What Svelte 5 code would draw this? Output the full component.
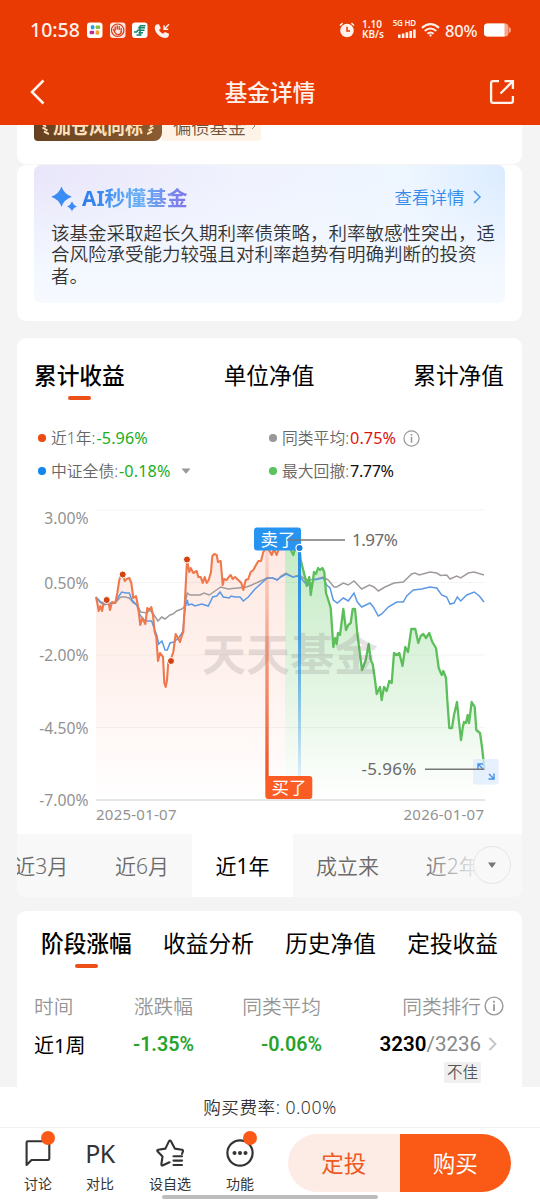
<script>
    let activeChart = $state('累计收益');
    let activePeriod = $state('近1年');
    let activeStage = $state('阶段涨幅');

    const chartTabs = ['累计收益', '单位净值', '累计净值'];
    const periods = ['近3月', '近6月', '近1年', '成立来', '近2年'];
    const stageTabs = ['阶段涨幅', '收益分析', '历史净值', '定投收益'];

    const axis = [
        { label: '3.00%', y: 510, text: 523.5 },
        { label: '0.50%', y: 582.5, text: 588.5 },
        { label: '-2.00%', y: 655, text: 661 },
        { label: '-4.50%', y: 727.5, text: 733.5 },
        { label: '-7.00%', y: 800, text: 806 },
    ];

    const fund =
        '96,597 97.7,605 98.7,611 100.3,606 102,611 104,601 106.7,600 108.7,603 110,610 112,602 115.3,603 117.3,593 119.3,580 120.7,576 122.7,575 124.7,581 126.7,579 129.3,578 131.3,583 133.3,598 136,596 138,606 140.3,625 142.3,618 145.3,624 147.3,608 149.3,610 151.3,607 153,615 154.7,632 156.3,637 158,661 160,653 163,657 164.3,683 165.7,687 167,680 168.3,662 170.5,660 173.3,652 175.7,634 178,638 180,642 182,635 183.3,632 185.3,594 187,560 189.3,572 190.7,568 193.3,573 196.7,571 198.3,577 200.7,577 202.7,583 204.7,577 206.7,583 208.7,580 211,572 212.3,556 214.3,554 216.7,555 218,562 220.7,561 222.7,585 224,579 226.7,580 228.7,577 230.7,575 232.7,579 235,577 238.3,580 241.3,583 243.3,590 245.7,580 248.3,579 250.7,572 253.3,570 256,565 258.3,561 261,561 263.3,552 266,548 268.3,549 271.7,555 274,549 276.7,555 278.7,549 282,548 285,545';
    const drawdown =
        '285,545 290,546 291.7,552 293.3,555 295.3,548 299.5,548 300.7,560 302.7,568 305,577 306.7,586 309.3,577 310.7,595 312.7,582 314,572 316,574 318,568 320,570 322.3,568 324.3,572 326,593 328.3,600 330.7,608 332,627 333.3,647 335.3,638 336.7,644 338,633 340,635 343.3,609 346,630 348.3,625 350.7,623 352.7,609 355,609 357.3,633 360.7,660 362,670 365.7,660 368.7,644 370.7,660 372.7,664 375,680 376.7,694 380,687 381.7,700 384,687 386.7,691 389.3,681 391.7,683 394,653 396.7,655 399.3,653 402.5,666 405.3,647 408,652 411.3,629 415.3,629 418.3,643 420.7,636 423.3,634 426,638 429.3,633 432.3,642 436,648 438.7,668 441.7,675 443.3,671 446,678 447.3,700 449.3,728 452,728 454,715 457,702 459,722 461,740 462.7,728 464,722 466,723 467.7,715 469,723 471.7,702 474.7,707 476.3,730 478.7,732 480,733 482,747 484.3,768';
    const average =
        '96,598 100.7,603 104,605 110,603 115,603 120.7,597 125,597 129.3,598 133.3,603 137.3,605 140.7,612 146.7,613 150,610 154,615 158,621 161.7,617 165,619 170,615 173,614 176.7,611 181.7,609 184.3,607 187.3,593 190,595 200,595 204,593 209.3,595 215,591 220.7,587 228,589 238,588 246.7,587 251.7,585 258.3,582 267.3,578 272.7,578 277.3,580 281,576 286,573 292.7,577 299.3,575 303.3,578 308.3,580 316.7,579 323.3,577 328.3,580 334,587 336.7,587 343.3,583 348.3,585 354,581 361.7,589 369.3,585 374,587 378.3,591 385,587 394,583 403.3,582 411.7,574 415,573 419.3,575 430,572 436.7,573 440.7,575.5 446.7,575 450,579 456.7,576 460.7,578 468.3,573 474,572 484,575';
    const index =
        '96,597 100.7,602 105,604 115,603 118.3,597 121.7,592 126,593 129.3,593 132,600 136.7,605 140,615 145,621 151.7,621 154,628 156.7,635 158.7,644 162,641 165,650 167.3,650 170,643 174,642 179.3,637 182.7,632 185.3,607 187.3,600 188.3,605 191.7,604 195,606 201.7,604 208.3,606 212.7,597 216.7,596 220,592 223.3,597 229.3,598 231,596 235,597 240,597 243.3,601 248.3,597 255,589 261.7,583 267.3,578 272.7,578 277.3,580 281,577 286,574 292.7,577 299.3,576 305,583 310.7,586 313.3,580 323.3,578 326.7,585 330,588 333.3,600 337.3,603 343.3,598 348.3,601 354,593 357.3,602 361.7,607 370,603 373.3,607 378.3,616 381.7,614 388.3,607 396.7,602 403.3,602 406.7,596 413.3,590 421.7,589 430,587 436.7,588 441.7,595 446.7,597 450,604 454,603 457.3,597 460.7,601 466.7,595 474.3,592 479.3,596 484,602';

    const trades = [[106.7, 600], [122.7, 574.5], [187, 559.5], [171, 661]];
</script>

{#snippet info(size)}
    <svg width={size} height={size} viewBox="0 0 18 18" fill="none" stroke="#999" stroke-width="1.3">
        <circle cx="9" cy="9" r="8" />
        <path d="M9 7.5V13.5M9 4.3V6.1" stroke-width="1.6" />
    </svg>
{/snippet}

<div class="page">
    <header>
        <div class="status">
            <span class="clock">10:58</span>
            <svg class="apps" width="84" height="18" viewBox="0 0 84 18">
                <rect x="0" y="1.5" width="15.5" height="15.5" rx="3" fill="#fff" />
                <rect x="3.8" y="4.3" width="3.6" height="4" rx="1.2" fill="#2b9be0" />
                <rect x="8.6" y="4.6" width="4.6" height="3.4" rx="1.2" fill="#8cbf3f" />
                <rect x="2.6" y="9.8" width="4.6" height="3.4" rx="1.2" fill="#b2339b" />
                <rect x="8.6" y="9.6" width="3.6" height="4.2" rx="1.2" fill="#f0a32e" />
                <rect x="23" y="1.5" width="15.5" height="15.5" rx="3" fill="#ffe6de" />
                <circle cx="30.7" cy="9.2" r="6.2" fill="none" stroke="#d83a18" stroke-width="1.2" />
                <path d="M28 11.5L26.6 8.5M28.2 9V6M30.2 8V5M32.2 8.4V5.6M34.2 9.3V7.4M28 11.5Q29.5 14.2 32 13.6Q34.6 12.6 34.2 9.3" fill="none" stroke="#d83a18" stroke-width="1.3" stroke-linecap="round" />
                <rect x="45" y="1.5" width="15.5" height="15.5" rx="3" fill="#fff" />
                <path d="M58.5 4.8H53.5L52 6.8H58M57.5 9.2H51L49.5 11H47M56 11.8H51.5M54.5 14H49.5M53 5V14" fill="none" stroke="#168469" stroke-width="1.5" />
                <path d="M69.2 3.5L72 3.3L73.8 7.2L72 8.9Q73.2 11.6 76 12.7L78 10.9L82 12.8Q82.3 17 77.7 17C72 16.7 66.5 10 68 5.3Z" fill="#fff1eb" />
                <path d="M82 3.3L77.3 8M77 4.2V8.3H81.2" fill="none" stroke="#fff1eb" stroke-width="1.4" />
            </svg>
            <svg class="alarm" width="16" height="16" viewBox="0 0 16 16">
                <circle cx="8" cy="8.5" r="6.8" fill="#fff1eb" />
                <path d="M8 4.8V9H11" fill="none" stroke="#e93a03" stroke-width="1.5" />
                <path d="M1 3.5L3.6 1.2M15 3.5L12.4 1.2" stroke="#fff1eb" stroke-width="1.6" />
            </svg>
            <span class="speed">1.10<br />KB/s</span>
            <div class="signal">
                <span>5G HD</span>
                <svg width="19" height="9" viewBox="0 0 19 9" fill="#fff1eb">
                    <rect x="1" y="5.5" width="2.6" height="3.5" />
                    <rect x="4.8" y="4.5" width="2.6" height="4.5" />
                    <rect x="8.6" y="3.3" width="2.6" height="5.7" />
                    <rect x="12.4" y="2" width="2.6" height="7" />
                    <rect x="16.1" y="0.5" width="2.6" height="8.5" />
                </svg>
            </div>
            <svg class="wifi" width="19" height="16" viewBox="0 0 20 16" fill="none" stroke="#fff1eb" stroke-width="2.2">
                <path d="M1 5.8Q10 -2 19 5.8M3.9 9Q10 3.8 16.1 9M6.7 12Q10 9.3 13.3 12" />
                <circle cx="10" cy="13.8" r="1.2" fill="#fff1eb" stroke="none" />
            </svg>
            <span class="percent">80%</span>
            <svg class="battery" width="27" height="14" viewBox="0 0 27 14">
                <rect x="0" y="0.5" width="24.5" height="13" rx="3.5" fill="#f6a78c" />
                <path d="M25 4Q27 4.5 27 7T25 10Z" fill="#f6a78c" />
                <path d="M3.5 .5H20.5V13.5H3.5Q0 13.5 0 10V4Q0 .5 3.5 .5Z" fill="#fff" />
            </svg>
        </div>
        <nav>
            <svg width="16" height="26" viewBox="0 0 16 26" fill="none" stroke="#fff3ee" stroke-width="2.5">
                <path d="M13.5 1.5L2 13L13.5 24.5" />
            </svg>
            <h1>基金详情</h1>
            <svg width="26" height="26" viewBox="0 0 26 26" fill="none" stroke="#fff3ee" stroke-width="2.3">
                <path d="M10 2.1H4Q2.1 2.1 2.1 4V22Q2.1 23.9 4 23.9H22Q23.9 23.9 23.9 22V17" />
                <path d="M11.5 14.5L23 3M15.5 2.1H23.9V10" />
            </svg>
        </nav>
    </header>

    <main>
        <section class="card tags">
            <div class="honor">
                <svg width="8" height="20" viewBox="0 0 8 20" fill="none" stroke="#ffe0ba" stroke-width="2">
                    <path d="M0.5 7L5 11M1.5 11.5L6.5 14.5M3 15.5L8 18" />
                </svg>
                <b>加仓风向标</b>
                <svg width="8" height="20" viewBox="0 0 8 20" fill="none" stroke="#ffe0ba" stroke-width="2">
                    <path d="M7.5 7L3 11M6.5 11.5L1.5 14.5M5 15.5L0 18" />
                </svg>
            </div>
            <div class="kind">偏债基金
                <svg width="5" height="8" viewBox="0 0 5 8" fill="none" stroke="#a08a78"><path d="M1 1L4 4L1 7" /></svg>
            </div>
        </section>

        <section class="card ai">
            <div class="ai-box">
                <div class="ai-head">
                    <svg class="spark" width="27" height="27" viewBox="0 0 27 27" fill="#3b8cf5">
                        <path d="M10.5 .5Q13 8 20.8 10.8Q13 13.5 10.5 21Q8 13.5 .2 10.8Q8 8 10.5 .5Z" />
                        <path d="M21 15.5Q22.2 19 26 20.5Q22.2 21.8 21 25.5Q19.8 21.8 16 20.5Q19.8 19 21 15.5Z" />
                    </svg>
                    <h2>AI秒懂基金</h2>
                    <span class="detail">查看详情</span>
                    <svg class="go" width="10" height="14" viewBox="0 0 10 14" fill="none" stroke="#4c98ee" stroke-width="1.5"><path d="M2 1L8 7L2 13" /></svg>
                </div>
                <p>该基金采取超长久期利率债策略，利率敏感性突出，适<br />合风险承受能力较强且对利率趋势有明确判断的投资<br />者。</p>
            </div>
        </section>

        <section class="card performance">
            <div class="chart-tabs">
                {#each chartTabs as tab}
                    <button class:active={activeChart === tab} onclick={() => (activeChart = tab)}>{tab}</button>
                {/each}
            </div>
            <div class="legend">
                <div class="item"><i class="orange"></i>近1年:<span class="down">-5.96%</span></div>
                <div class="item"><i class="gray"></i>同类平均:<span class="up">0.75%</span><span class="tip">{@render info(17)}</span></div>
                <div class="item"><i class="blue"></i>中证全债:<span class="down">-0.18%</span>
                    <svg class="caret" width="10" height="6" viewBox="0 0 10 6" fill="#999"><path d="M0.5 .5H9.5L5.8 5Q5 5.8 4.2 5Z" /></svg>
                </div>
                <div class="item"><i class="green"></i>最大回撤:<span class="plain">7.77%</span></div>
            </div>

            <svg class="chart" width="505" height="339" viewBox="17 495 505 339">
                <defs>
                    <linearGradient id="fundFill" x1="0" y1="545" x2="0" y2="799" gradientUnits="userSpaceOnUse">
                        <stop offset="0" stop-color="#f96134" stop-opacity=".14" />
                        <stop offset=".55" stop-color="#f96134" stop-opacity=".08" />
                        <stop offset="1" stop-color="#f96134" stop-opacity="0" />
                    </linearGradient>
                    <linearGradient id="dropFill" x1="0" y1="545" x2="0" y2="799" gradientUnits="userSpaceOnUse">
                        <stop offset="0" stop-color="#5fc75f" stop-opacity=".36" />
                        <stop offset=".5" stop-color="#5fc75f" stop-opacity=".2" />
                        <stop offset="1" stop-color="#5fc75f" stop-opacity="0" />
                    </linearGradient>
                    <linearGradient id="buyLine" x1="0" y1="515" x2="0" y2="776" gradientUnits="userSpaceOnUse">
                        <stop offset="0" stop-color="#ee5423" stop-opacity="0" />
                        <stop offset=".55" stop-color="#ee5423" stop-opacity=".55" />
                        <stop offset="1" stop-color="#ee5423" />
                    </linearGradient>
                    <linearGradient id="sellLine" x1="0" y1="550" x2="0" y2="780" gradientUnits="userSpaceOnUse">
                        <stop offset="0" stop-color="#268ee4" />
                        <stop offset=".35" stop-color="#268ee4" stop-opacity=".85" />
                        <stop offset="1" stop-color="#268ee4" stop-opacity=".1" />
                    </linearGradient>
                </defs>

                {#each axis as row}
                    <line x1="96" x2="485" y1={row.y} y2={row.y} stroke={row.y === 800 ? '#e6e6e6' : '#f3f3f3'} stroke-width={row.y === 800 ? 2 : 1} />
                    <text class="axis" x="88.5" y={row.text} text-anchor="end">{row.label}</text>
                {/each}

                <polygon points="96,799 {fund} 285,799" fill="url(#fundFill)" />
                <polygon points="285,799 {drawdown} 484.3,799" fill="url(#dropFill)" />
                <polyline points={average} fill="none" stroke="#a09b9a" stroke-width="1.5" />
                <polyline points={index} fill="none" stroke="#5b98e6" stroke-width="1.5" />
                <polyline points={fund} fill="none" stroke="#ef784d" stroke-width="2.1" stroke-linejoin="round" />
                <polyline points={drawdown} fill="none" stroke="#5dbf5b" stroke-width="2.3" stroke-linejoin="round" />
                <text class="watermark" x="202" y="671" textLength="176">天天基金</text>

                <rect x="265.3" y="515" width="3.4" height="264" fill="url(#buyLine)" />
                <rect x="298" y="549" width="3" height="231" fill="url(#sellLine)" />
                {#each trades as [x, y]}
                    <circle cx={x} cy={y} r="3.5" fill="#d3420f" stroke="#fff" stroke-width="1" />
                {/each}

                <rect x="254" y="527.5" width="47" height="23" rx="3" fill="#2794f2" />
                <text class="flag" x="260.5" y="545.5">卖了</text>
                <line x1="287" x2="345" y1="540" y2="540" stroke="#777" stroke-width="1.5" />
                <circle cx="299.5" cy="548" r="3.6" fill="#1683e0" stroke="#fff" stroke-width="1.2" />
                <text class="value" x="352" y="545.5" textLength="46">1.97%</text>

                <rect x="265.3" y="776" width="47" height="23" rx="3" fill="#fb5c24" />
                <text class="flag" x="271.5" y="794">买了</text>

                <rect x="473" y="759" width="25.5" height="25.5" rx="2" fill="#deebfd" fill-opacity=".75" />
                <path d="M478 769V764H483M478 764L483 769M489 774L494 779M494 773.5V779H488.5" fill="none" stroke="#438fea" stroke-width="1.4" />
                <line x1="425" x2="484.5" y1="769.3" y2="769.3" stroke="#777" stroke-width="1.5" />
                <text class="value" x="361.5" y="775" textLength="55">-5.96%</text>
                <text class="date" x="96" y="820" textLength="80.5">2025-01-07</text>
                <text class="date" x="403.5" y="820" textLength="80.5">2026-01-07</text>
            </svg>

            <div class="periods">
                {#each periods as period}
                    <button class:active={activePeriod === period} onclick={() => (activePeriod = period)}>{period}</button>
                {/each}
                <div class="more">
                    <span><svg width="8" height="6" viewBox="0 0 8 6" fill="#777"><path d="M0 .5H8L4.8 5Q4 6 3.2 5Z" /></svg></span>
                </div>
            </div>
        </section>

        <section class="card stages">
            <div class="stage-tabs">
                {#each stageTabs as tab}
                    <button class:active={activeStage === tab} onclick={() => (activeStage = tab)}>{tab}</button>
                {/each}
            </div>
            <div class="row head">
                <span>时间</span><span>涨跌幅</span><span>同类平均</span><span>同类排行</span>{@render info(20)}
            </div>
            <div class="row body">
                <span>近1周</span>
                <span class="num">-1.35%</span>
                <span class="num">-0.06%</span>
                <span class="rank"><b>3230</b>/3236</span>
                <svg width="9" height="14" viewBox="0 0 9 14" fill="none" stroke="#c4c4c4" stroke-width="1.8"><path d="M1.5 1L7.5 7L1.5 13" /></svg>
            </div>
            <span class="grade">不佳</span>
        </section>
    </main>

    <footer>
        <div class="fee">购买费率: 0.00%</div>
        <div class="actions">
            <div class="action">
                <svg width="26" height="28" viewBox="0 0 26 28" fill="none" stroke="#333" stroke-width="2.1">
                    <path d="M1.6 26V3.5Q1.6 2.3 2.8 2.3H23Q24.3 2.3 24.3 3.5V19.8Q24.3 21 23 21H6.5Z" stroke-linejoin="round" />
                </svg>
                <span>讨论</span>
                <em></em>
            </div>
            <div class="action">
                <strong>PK</strong>
                <span>对比</span>
            </div>
            <div class="action">
                <svg width="28" height="28" viewBox="0 0 28 28" fill="none" stroke="#333" stroke-width="2.1" stroke-linejoin="round" stroke-linecap="round">
                    <path d="M26 15L27 12.2Q27.3 11 26 10.8L18.8 9.6L15.1 2.4Q14 .7 12.9 2.4L9.4 9.6L2.2 10.8Q.5 11.2 1.7 12.6L6.5 17.6L5.4 25Q5.2 27 7 26.2L13.5 23.3" />
                    <path d="M17.5 17.2H26M17.5 21.6H26M17.5 26H26" />
                </svg>
                <span>设自选</span>
            </div>
            <div class="action">
                <svg width="28" height="28" viewBox="0 0 28 28" fill="none" stroke="#333" stroke-width="2.2">
                    <circle cx="14" cy="14" r="12.6" />
                    <g fill="#333" stroke="none"><circle cx="8.5" cy="14" r="2" /><circle cx="14" cy="14" r="2" /><circle cx="19.5" cy="14" r="2" /></g>
                </svg>
                <span>功能</span>
                <em></em>
            </div>
            <div class="buttons">
                <button class="plan">定投</button>
                <button class="buy">购买</button>
            </div>
        </div>
        <div class="home"></div>
    </footer>
</div>

<style>
    :global(body) {
        margin: 0;
        font-family: "Noto Sans", "Noto Sans CJK SC", sans-serif;
    }

    .page {
        width: 540px;
        height: 1200px;
        display: flex;
        flex-direction: column;
        overflow: hidden;
        background: #f4f4f4;
        color: #000;
    }

    svg {
        display: block;
        flex: none;
    }

    button {
        font: inherit;
        border: none;
        background: none;
        padding: 0;
        color: inherit;
        white-space: nowrap;
    }

    h1, h2, p {
        margin: 0;
    }

    header {
        height: 125px;
        flex: none;
        background: #e93a03;
        color: #fff1eb;
    }

    .status {
        display: flex;
        align-items: center;
        height: 60px;
        padding: 0 30px;
        box-sizing: border-box;
    }

    .clock {
        width: 57px;
        margin-top: -2px;
        font: 500 19.5px "Noto Sans", sans-serif;
        white-space: nowrap;
    }

    .alarm {
        margin-left: auto;
    }

    .speed {
        margin-left: 7px;
        width: 25px;
        margin-top: -2px;
        font: 600 10px/10px "Noto Sans", sans-serif;
    }

    .signal {
        width: 26px;
        margin-left: 3px;
        margin-top: -3px;
        display: flex;
        flex-direction: column;
        align-items: flex-end;
        gap: 2px;
        font: 600 8px/8px "Noto Sans", sans-serif;
        letter-spacing: -0.2px;
        white-space: nowrap;
    }

    .wifi {
        margin-left: 5px;
    }

    .percent {
        width: 35px;
        margin: 0 4px 0 5px;
        font: 500 16.5px "Noto Sans", sans-serif;
        letter-spacing: -0.2px;
    }

    .battery {
        margin-right: -1px;
    }

    nav {
        display: flex;
        align-items: center;
        justify-content: space-between;
        height: 64px;
        padding: 0 25px 0 30px;
    }

    h1 {
        font-size: 22.7px;
        font-weight: 500;
        margin: -2px 0 0 5px;
    }

    main {
        flex: 1;
        min-height: 0;
        overflow: hidden;
        padding: 0 18px 0 17px;
    }

    .card {
        background: #fff;
        border-radius: 9px;
    }

    .tags {
        height: 39px;
        border-radius: 0 0 9px 9px;
        display: flex;
        padding-left: 17px;
        overflow: hidden;
    }

    .honor, .kind {
        display: flex;
        align-items: center;
        box-sizing: border-box;
        height: 27px;
        margin-top: -11.5px;
        padding-bottom: 2px;
    }

    .honor {
        justify-content: center;
        gap: 4px;
        width: 128px;
        border-radius: 4px 10px 8px 4px;
        background: linear-gradient(90deg, #66401f, #8b5c31);
        color: #ffe0ba;
        font-size: 18px;
    }

    .kind {
        gap: 5px;
        width: 99px;
        padding-left: 11px;
        background: #fdf3e7;
        border-radius: 0 4px 4px 0;
        color: #73543b;
        font-size: 18.3px;
        font-weight: 350;
    }

    .ai {
        margin-top: 1px;
        height: 156px;
        padding: 0 17.5px 0 17px;
        box-sizing: border-box;
    }

    .ai-box {
        height: 138px;
        padding: 16px 9px 0 17px;
        box-sizing: border-box;
        border-radius: 7px;
        background:
            linear-gradient(180deg, rgba(245, 249, 255, 0) 10%, #f3f8ff 75%, #f6faff),
            linear-gradient(100deg, #e9e6fa 0%, #f0f2fe 42%, #eef6ff 75%, #d8eaff 100%);
    }

    .ai-head {
        display: flex;
        align-items: center;
        height: 32px;
    }

    .spark {
        margin-top: 5px;
    }

    h2 {
        margin: 2px 0 0 4px;
        font-size: 20.8px;
        font-weight: 700;
        line-height: 32px;
        background: linear-gradient(90deg, #277bed, #68b0f5 55%, #8071ea);
        -webkit-background-clip: text;
        background-clip: text;
        color: transparent;
    }

    .detail {
        margin-left: auto;
        margin-right: 7px;
        font-size: 17.5px;
        line-height: 30px;
        font-weight: 350;
        color: #348aec;
    }

    .go {
        margin-right: 14px;
    }

    .ai-box p {
        margin-top: 8.5px;
        font-size: 18.5px;
        line-height: 21.7px;
        font-weight: 350;
        color: #333;
        white-space: nowrap;
    }

    .performance {
        margin-top: 17px;
        height: 559px;
        display: flex;
        flex-direction: column;
        overflow: hidden;
    }

    .chart-tabs {
        display: flex;
        justify-content: space-between;
        padding: 20px 18px 0 17px;
        height: 44px;
        flex: none;
        font-size: 22.7px;
        line-height: 36px;
    }

    .chart-tabs button, .stage-tabs button {
        display: flex;
        flex-direction: column;
        align-items: center;
    }

    .chart-tabs .active, .stage-tabs .active {
        font-weight: 500;
    }

    .chart-tabs .active::after, .stage-tabs .active::after {
        content: "";
        width: 22.5px;
        height: 4px;
        margin-top: 2px;
        border-radius: 2px;
        background: #ec5018;
    }

    .legend {
        display: grid;
        grid-template-columns: 231px 1fr;
        grid-auto-rows: 33px;
        padding: 19.5px 0 0 21px;
        height: 73.5px;
        flex: none;
    }

    .item {
        display: flex;
        align-items: center;
        font-size: 15.8px;
        line-height: 24px;
        font-weight: 350;
        color: #666;
    }

    .item i {
        width: 7.5px;
        height: 7.5px;
        border-radius: 50%;
        margin-right: 5.5px;
    }

    .orange { background: #ec4c12; }
    .gray { background: #999; }
    .blue { background: #1487ee; }
    .green { background: #5cc25e; }

    .down, .up, .plain {
        margin-left: 1px;
        font-size: 16.2px;
        font-weight: 400;
        letter-spacing: 0.1px;
    }

    .down { color: #1dad1d; }
    .up { color: #dc1414; }
    .plain { color: #111; letter-spacing: -0.4px; }

    .tip {
        margin-left: 7px;
    }

    .caret {
        margin-left: 11px;
    }

    .chart {
        margin-top: -0.5px;
    }

    .axis {
        font-size: 15.7px;
        fill: #929292;
    }

    .date {
        font-size: 15px;
        fill: #929292;
    }

    .value {
        font-size: 17px;
        fill: #6a6a6a;
    }

    .flag {
        font-size: 17.5px;
        fill: #fff;
    }

    .watermark {
        font-size: 44px;
        font-weight: 700;
        fill: #776d70;
        fill-opacity: 0.2;
    }

    .periods {
        position: relative;
        flex: 1;
        display: flex;
        margin-left: -26px;
        background: #f8f8f8;
    }

    .periods button {
        flex: none;
        padding: 0 23.3px 1px;
        font-size: 21px;
        font-weight: 350;
        color: #6b6b6b;
    }

    .periods .active {
        background: #fff;
        color: #000;
        font-weight: 400;
    }

    .more {
        position: absolute;
        top: 0;
        right: 0;
        bottom: 0;
        width: 100px;
        display: flex;
        align-items: center;
        justify-content: flex-end;
        background: linear-gradient(90deg, rgba(248, 248, 248, 0), #f8f8f8 60%);
    }

    .more span {
        width: 36px;
        height: 36px;
        margin-right: 11px;
        display: flex;
        align-items: center;
        justify-content: center;
        border: 1px solid #e5e5e5;
        border-radius: 50%;
        background: #f8f8f8;
    }

    .stages {
        margin-top: 14px;
        height: 200px;
    }

    .stage-tabs {
        display: flex;
        justify-content: space-between;
        padding: 15px 24px 0 24px;
        height: 61px;
        font-size: 22.7px;
        line-height: 36px;
    }

    .row {
        display: grid;
        grid-template-columns: 70px 89px 128px 160px 23px;
        align-items: center;
        padding-left: 17px;
        text-align: right;
        white-space: nowrap;
    }

    .row span:first-child {
        text-align: left;
    }

    .row svg {
        justify-self: end;
    }

    .head {
        height: 37px;
        font-size: 19.7px;
        font-weight: 350;
        color: #959595;
    }

    .body {
        height: 40px;
        font-size: 20px;
    }

    .body svg {
        margin-right: 7px;
    }

    .num {
        margin-right: -1px;
        font: 600 19.7px Roboto, sans-serif;
        color: #27a32a;
    }

    .rank {
        font: 400 20.5px Roboto, sans-serif;
        color: #888;
    }

    .rank b {
        color: #000;
        font-weight: 600;
    }

    .grade {
        display: block;
        width: 37px;
        margin: -2px 0 0 427px;
        border-radius: 2px;
        background: #f0f0f0;
        color: #555;
        font-size: 15.5px;
        font-weight: 350;
        line-height: 21px;
        text-align: center;
    }

    footer {
        position: relative;
        flex: none;
        height: 113px;
        background: #fff;
    }

    .fee {
        height: 40px;
        border-bottom: 1px solid #f1f1f1;
        color: #333;
        font-size: 17.6px;
        font-weight: 350;
        letter-spacing: 0.5px;
        line-height: 40px;
        text-align: center;
    }

    .actions {
        display: grid;
        grid-template-columns: 70px 54px 86px 54px 1fr;
        padding: 6px 29px 0 3px;
    }

    .action {
        position: relative;
        display: flex;
        flex-direction: column;
        align-items: center;
        padding-top: 5px;
        color: #333;
    }

    .action span {
        margin-top: 5px;
        font-size: 14px;
        line-height: 24px;
        white-space: nowrap;
    }

    .action strong {
        font: 400 25px/28px "Noto Sans", sans-serif;
        letter-spacing: -0.5px;
    }

    .action em {
        position: absolute;
        top: -3px;
        left: calc(50% + 3px);
        width: 14px;
        height: 14px;
        border-radius: 50%;
        background: #fa5a16;
    }

    .buttons {
        display: flex;
        justify-self: end;
        width: 223px;
        height: 58px;
        border-radius: 29px;
        overflow: hidden;
        font-size: 22.5px;
    }

    .buttons button {
        flex: 1;
        padding-bottom: 1px;
    }

    .plan {
        background: #fdece6;
        color: #ee5a22;
    }

    .buy {
        background: #fa5a16;
        color: #fff;
    }

    .home {
        position: absolute;
        left: 162px;
        bottom: 1.5px;
        width: 216px;
        height: 3.5px;
        border-radius: 2px;
        background: #bdbdbd;
    }
</style>
